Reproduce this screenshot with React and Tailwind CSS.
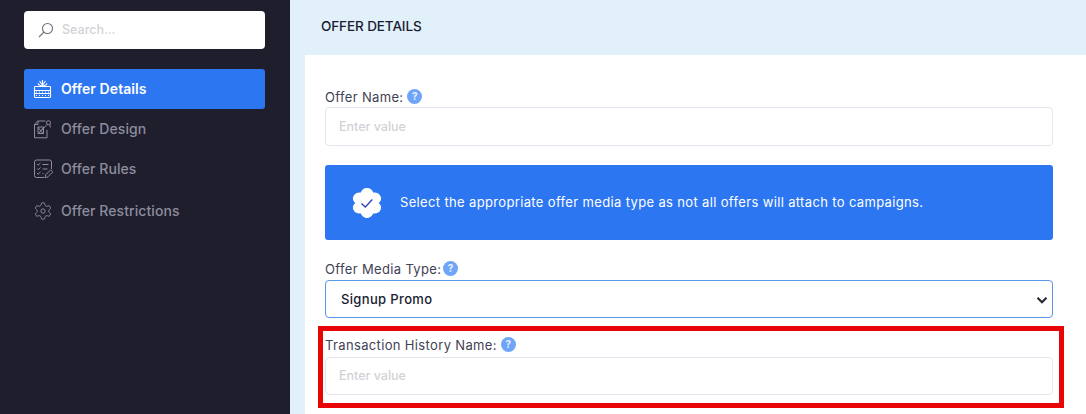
import React from "react";

function Help({ ml = "ml-[4px]" }) {
  return (
    <span className={`${ml} inline-flex h-[15px] w-[15px] -translate-y-[1px] items-center justify-center rounded-full bg-[#6fa5f7] text-[10px] font-bold leading-none text-[#e8f0ff]`}>?</span>
  );
}

function Field({ label, className = "", inputClass = "mt-[2px] h-[39px]" }) {
  return (
    <div className={className}>
      <div className="flex h-[16px] items-center text-[13px] leading-[16px] tracking-[0.35px] text-[#3f4254]">
        {label}<Help />
      </div>
      <div className={`${inputClass} flex items-center rounded-[4px] border border-[#e4e6ef] bg-white pl-[13px] pt-[1px] text-[12.5px] font-medium text-[#d2d2d6]`}>
        Enter value
      </div>
    </div>
  );
}

function Gift({ c }) {
  return (
    <svg width="20" height="20" viewBox="0 0 20 20" fill="none" stroke={c} strokeWidth="1.1">
      <rect x="1.5" y="7.5" width="16" height="11" rx="0.8" />
      <path d="M1.5 11.5h16M1.5 14.5h16M3 13h1M6 13h1M9 13h1M12 13h1M15 13h1M3 16.5h1M6 16.5h1M9 16.5h1M12 16.5h1M15 16.5h1" />
      <path d="M9.5 7c-2-.2-4-1-4.500-2.600M9.500 7c2-.2 4-1 4.500-2.600M9.500 6.500V1M6.500 2l2.500 3.500M12.500 2L10 5.500" />
    </svg>
  );
}

function Design({ c }) {
  return (
    <svg width="20" height="20" viewBox="0 0 20 20" fill="none" stroke={c} strokeWidth="1">
      <path d="M12.500 2H4.800L1.500 5.200V18.800h12.500V11" />
      <path d="M1.500 5.500h3.500V2" />
      <path d="M5 8.500l5 6M10.500 8.500l-5 6M5 8h5.500v6.500H5z" />
      <circle cx="15.500" cy="3.700" r="2" />
      <path d="M14 5.500L9 11M17 5.500l.3 3" />
    </svg>
  );
}

function Rules({ c }) {
  return (
    <svg width="20" height="20" viewBox="0 0 20 20" fill="none" stroke={c} strokeWidth="1">
      <path d="M11 18.500H3.500a2 2 0 0 1-2-2V3a2 2 0 0 1 2-2h13a2 2 0 0 1 2 2v7" />
      <path d="M4 5l1.200 1.200L7.500 4M4 9.500l1.200 1.200L7.500 8.500M4 14l1.200 1.200L7.500 13M9.500 5.500h6M9.500 10h5M9.500 14.500h1" />
      <path d="M12 18.800l.7-3 5-5 2.100 2.100-5 5z" />
    </svg>
  );
}

function Gear({ c }) {
  return (
    <svg width="20" height="20" viewBox="0 0 24 24" fill="none" stroke={c} strokeWidth="1.15">
      <path d="M12.220 2h-.44a2 2 0 0 0-2 2v.18a2 2 0 0 1-1 1.730l-.43.25a2 2 0 0 1-2 0l-.15-.08a2 2 0 0 0-2.730.73l-.22.38a2 2 0 0 0 .73 2.730l.15.1a2 2 0 0 1 1 1.720v.51a2 2 0 0 1-1 1.740l-.15.09a2 2 0 0 0-.73 2.730l.22.38a2 2 0 0 0 2.730.73l.15-.08a2 2 0 0 1 2 0l.43.25a2 2 0 0 1 1 1.730V20a2 2 0 0 0 2 2h.44a2 2 0 0 0 2-2v-.18a2 2 0 0 1 1-1.730l.43-.25a2 2 0 0 1 2 0l.15.08a2 2 0 0 0 2.730-.73l.22-.39a2 2 0 0 0-.73-2.730l-.15-.08a2 2 0 0 1-1-1.740v-.5a2 2 0 0 1 1-1.740l.15-.09a2 2 0 0 0 .73-2.730l-.22-.38a2 2 0 0 0-2.730-.73l-.15.08a2 2 0 0 1-2 0l-.43-.25a2 2 0 0 1-1-1.730V4a2 2 0 0 0-2-2z" />
      <circle cx="12" cy="12" r="2.600" />
    </svg>
  );
}

function NavItem({ Icon, label, active, h = "h-[40px]" }) {
  return (
    <div className={`flex ${h} items-center gap-[8px] rounded-[3px] pl-[9px] text-[14px] font-medium ${active ? "bg-[#2c76f2] font-semibold text-white" : "text-[#8d8d9e]"}`}>
      <Icon c={active ? "#ffffff" : "#8d8d9e"} />
      <span className="-translate-y-[1px] tracking-[0.08px]">{label}</span>
    </div>
  );
}

export default function App() {
  return (
    <div className="flex h-[414px] w-[1086px] overflow-hidden bg-[#e2f0f9] font-['Inter','Noto_Sans',sans-serif]">
      <aside className="flex w-[290px] shrink-0 flex-col bg-[#1e1e2d] pl-[24px] pr-[25px] pt-[11px]">
        <div className="flex h-[38px] items-center rounded-[4px] bg-white pl-[14px]">
          <svg width="16" height="16" viewBox="0 0 16 16" fill="none" stroke="#6f7079" strokeWidth="1.1">
            <circle cx="9.500" cy="6.500" r="5" />
            <path d="M6 10L1 15" />
          </svg>
          <span className="ml-[8px] text-[12.5px] font-medium text-[#d2d2d6]">Search...</span>
        </div>
        <div className="mt-[20px] flex flex-col">
          <NavItem Icon={Gift} label="Offer Details" active />
          <NavItem Icon={Design} label="Offer Design" />
          <NavItem Icon={Rules} label="Offer Rules" />
          <NavItem Icon={Gear} label="Offer Restrictions" h="h-[44px]" />
        </div>
      </aside>
      <main className="flex min-w-0 flex-1 flex-col">
        <div className="flex h-[55px] shrink-0 items-center pb-[3px] pl-[31px] text-[13.5px] font-medium tracking-[-0.1px] text-[#181c32]">
          OFFER DETAILS
        </div>
        <div className="relative ml-[15px] flex-1 bg-white pl-[20px] pr-[33px] pt-[34px]">
          <Field label="Offer Name:" />
          <div className="mt-[19px] flex h-[75px] items-center rounded-[3px] bg-[#2c76f2] pl-[27px]">
            <svg width="30" height="32" viewBox="0 0 30 32">
              <path fill="#ffffff" d="M15 1c3.200 0 5.400 2 6.200 4.500 3-.5 6.600 1 7.600 4.300 1 3-.6 5-2.200 6.200 1.600 1.200 3.200 3.200 2.200 6.200-1 3.300-4.600 4.800-7.600 4.300C20.400 28.500 18.200 31 15 31s-5.400-2.500-6.200-4.500c-3 .5-6.600-1-7.600-4.300-1-3 .6-5 2.200-6.200C1.800 14.800.2 12.800 1.200 9.800c1-3.300 4.600-4.800 7.600-4.300C9.600 3 11.800 1 15 1z" />
              <path d="M9.500 16.500l3.800 3.500 7-7.500" fill="none" stroke="#2340b8" strokeWidth="1.300" />
            </svg>
            <span className="ml-[18px] text-[13px] tracking-[0.35px] text-white">
              Select the appropriate offer media type as not all offers will attach to campaigns.
            </span>
          </div>
          <div className="mt-[21px] flex h-[16px] items-center text-[13px] leading-[16px] tracking-[0.35px] text-[#3f4254]">
            Offer Media Type:<Help ml="ml-[2px]" />
          </div>
          <div className="mt-[3px] flex h-[38px] items-center justify-between rounded-[4px] border border-[#5b96ee] bg-white pl-[15px] pr-[4px] pt-[1px] text-[13px] font-medium tracking-[0.35px] text-[#181c32]">
            <span>Signup Promo</span>
            <svg width="12" height="12" viewBox="0 0 16 16" fill="none" stroke="#212631" strokeWidth="2.600">
              <path d="M2 5l6 6 6-6" />
            </svg>
          </div>
          <Field label="Transaction History Name:" className="mt-[19px]" inputClass="mt-[4px] h-[38px]" />
          <div className="absolute left-[13px] top-[271px] h-[82px] w-[746px] border-[5px] border-[#e80505]" />
        </div>
      </main>
    </div>
  );
}
